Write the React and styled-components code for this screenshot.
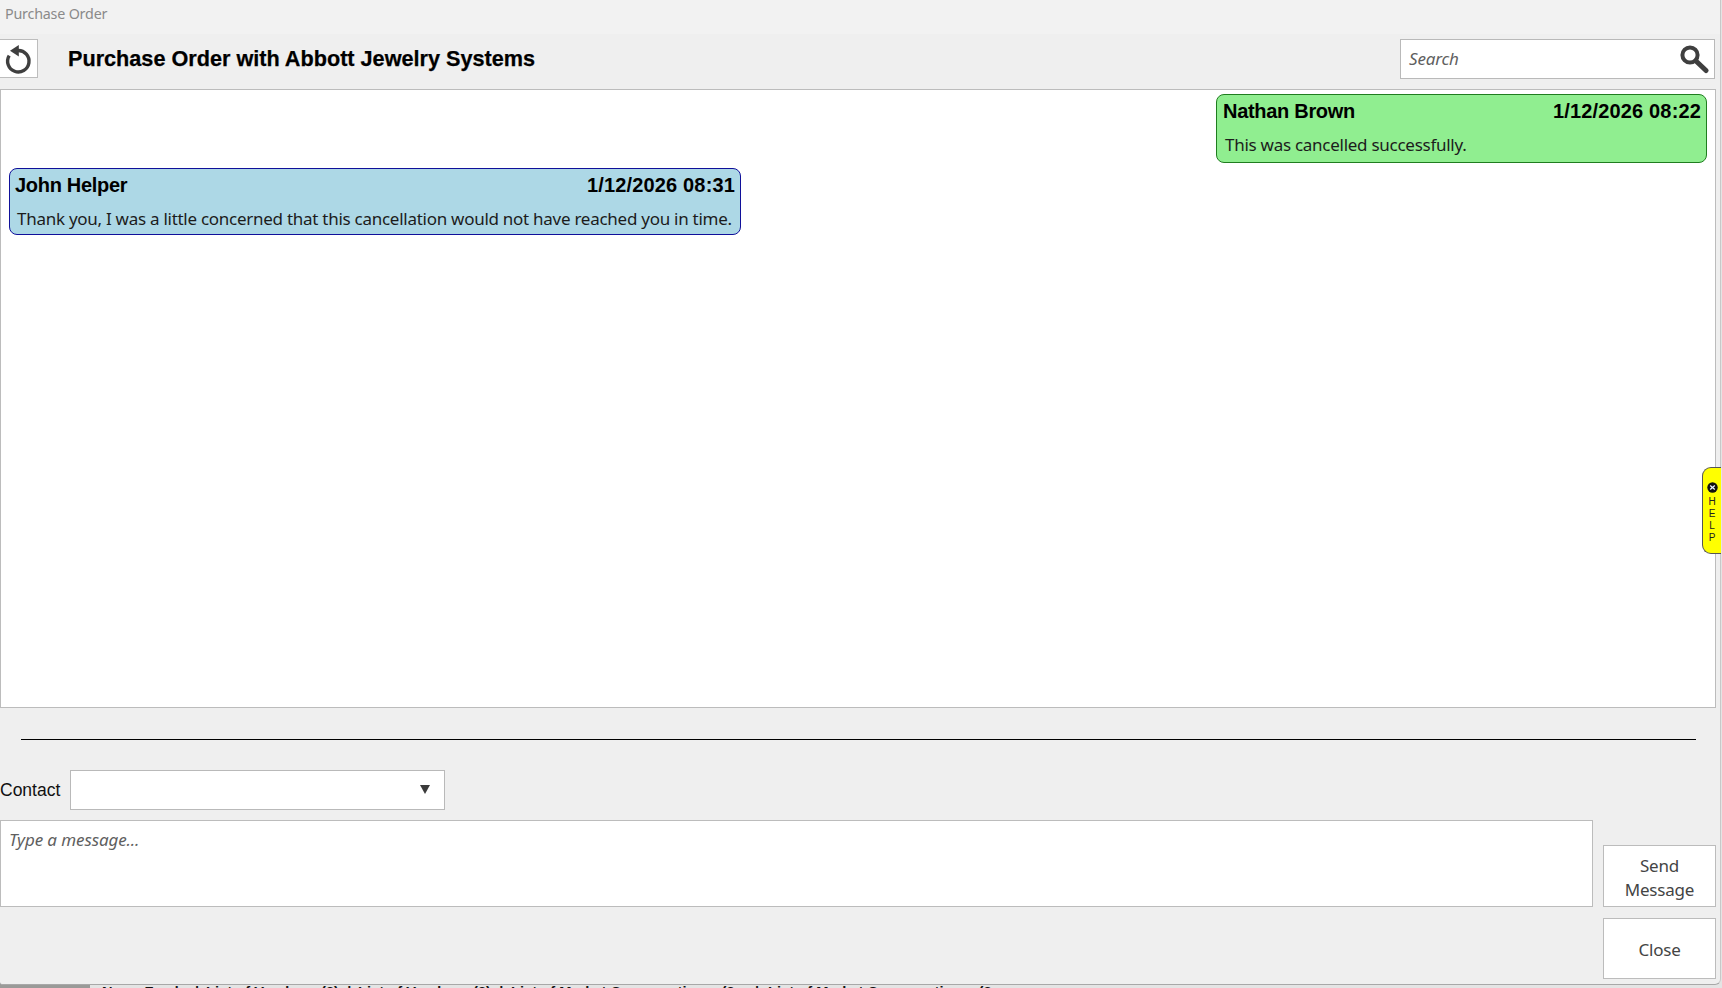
import React from "react";
import styled, { createGlobalStyle } from "styled-components";

const Global = createGlobalStyle`
  html, body { margin: 0; padding: 0; background: #8c8c8c; }
  body { font-family: "Noto Sans", "Open Sans", sans-serif; overflow: hidden; }
  * { box-sizing: border-box; }
`;

const Page = styled.div`
  position: relative;
  width: 1722px;
  height: 988px;
  overflow: hidden;
  display: flex;
  flex-direction: column;
  background: linear-gradient(90deg, #9a9a98 0 90px, #e4e4e4 90px);
`;

const Dialog = styled.div`
  width: 1721px;
  height: 985px;
  flex: none;
  display: flex;
  flex-direction: column;
  background: #efefef;
  border-bottom: 1px solid #a8a8a8;
  border-right: 1px solid #c8c8c8;
  border-bottom-right-radius: 6px;
  border-bottom-left-radius: 3px;
`;

const WindowTitle = styled.div`
  height: 34px;
  flex: none;
  padding: 4px 0 0 5px;
  background: #f2f2f2;
  color: #8a8a8a;
  font-size: 14.3px;
  line-height: 20px;
  letter-spacing: -0.2px;
`;

const Toolbar = styled.div`
  height: 55px;
  flex: none;
  display: flex;
  align-items: flex-start;
  padding: 5px 5px 0 0;
`;

const RefreshButton = styled.button`
  width: 38px;
  height: 39px;
  padding: 0;
  display: flex;
  align-items: center;
  justify-content: center;
  background: #fff;
  border: 1px solid #bdbdbd;
  border-left: none;
`;

const Heading = styled.h1`
  flex: 1;
  margin: 0 0 0 30px;
  font: bold 21.65px/40px "Liberation Sans", Arial, sans-serif;
  color: #000;
  -webkit-text-stroke: 0.25px #000;
`;

const SearchBox = styled.div`
  width: 315px;
  height: 40px;
  display: flex;
  align-items: center;
  justify-content: space-between;
  padding: 0 4px 0 8px;
  background: #fff;
  border: 1px solid #b9b9b9;
`;

const SearchHint = styled.span`
  padding-bottom: 2px;
  font: italic 17px "Noto Sans", sans-serif;
  color: #5f5f5f;
  letter-spacing: -0.15px;
`;

const ChatPanel = styled.div`
  height: 619px;
  flex: none;
  margin-right: 4px;
  padding: 4px 8px 0 8px;
  display: flex;
  flex-direction: column;
  gap: 5px;
  background: #fff;
  border: 1px solid #bcbcbc;
`;

const Bubble = styled.div`
  width: ${(p) => p.$width}px;
  height: ${(p) => p.$height}px;
  align-self: ${(p) => (p.$mine ? "flex-end" : "flex-start")};
  padding: 4px 5px 0 ${(p) => (p.$mine ? 6 : 5)}px;
  background: ${(p) => (p.$mine ? "#90ee90" : "#add8e6")};
  border: 1px solid ${(p) => (p.$mine ? "#1f7d1f" : "#10109a")};
  border-radius: 8px;
`;

const BubbleHead = styled.div`
  display: flex;
  justify-content: space-between;
  font: bold 20px/24px "Liberation Sans", Arial, sans-serif;
  color: #000;
`;

const SenderName = styled.span`
  letter-spacing: -0.3px;
`;

const SentAt = styled.span`
  letter-spacing: 0.15px;
`;

const BubbleText = styled.div`
  margin: 10px 0 0 2px;
  font-size: 17px;
  line-height: 23px;
  color: #1c1c1c;
  white-space: nowrap;
  letter-spacing: -0.27px;
`;

const Divider = styled.hr`
  margin: 31px 24px 0 21px;
  height: 1px;
  border: none;
  background: #000;
  flex: none;
`;

const ContactRow = styled.div`
  margin-top: 30px;
  height: 40px;
  flex: none;
  display: flex;
  align-items: center;
  gap: 9px;
`;

const ContactLabel = styled.label`
  font: 17.5px "Liberation Sans", Arial, sans-serif;
  color: #111;
  width: 61px;
`;

const Select = styled.div`
  width: 375px;
  height: 40px;
  display: flex;
  align-items: center;
  justify-content: flex-end;
  padding: 0 14px 2px 0;
  background: #fff;
  border: 1px solid #b9b9b9;
`;

const Composer = styled.div`
  margin-top: 10px;
  flex: none;
  display: grid;
  grid-template-columns: 1593px 113px;
  grid-template-rows: 87px 72px;
  column-gap: 10px;
`;

const MessageBox = styled.div`
  padding: 9px 8px;
  background: #fff;
  border: 1px solid #bcbcbc;
  font: italic 17px/20px "Noto Sans", sans-serif;
  color: #5f5f5f;
  letter-spacing: -0.1px;
`;

const ActionColumn = styled.div`
  grid-column: 2;
  grid-row: 1 / span 2;
  display: flex;
  flex-direction: column;
  padding-top: 25px;
  gap: 11px;
`;

const ActionButton = styled.button`
  width: 113px;
  height: ${(p) => p.$height}px;
  padding: 3px 0 0;
  background: #fff;
  border: 1px solid #bcbcbc;
  font: 17px/24px "Noto Sans", sans-serif;
  color: #444;
  letter-spacing: -0.2px;
`;

const BehindStrip = styled.div`
  height: 3px;
  flex: none;
  display: flex;
  overflow: hidden;
  font: bold 14.7px/14px "Liberation Sans", Arial, sans-serif;
  color: #111;
  white-space: pre;
`;

const StripItem = styled.span`
  flex: none;
  width: ${(p) => p.$width}px;
`;

const HelpTab = styled.div`
  position: absolute;
  left: 1702px;
  top: 467px;
  width: 19px;
  height: 87px;
  display: flex;
  flex-direction: column;
  align-items: center;
  padding-top: 14px;
  background: #ffff00;
  border: 1px solid #555;
  border-right: none;
  border-radius: 9px 0 0 9px;
`;

const HelpLetters = styled.div`
  margin-top: 3px;
  font: 10px/12px "Liberation Sans", Arial, sans-serif;
  color: #222;
  text-align: center;
`;

const RefreshIcon = () => (
  <svg width="36" height="37" viewBox="0 0 36 37" aria-hidden="true">
    <path d="M17 10.5 A10.7 10.7 0 1 1 8.2 15.6" fill="none" stroke="#3f3f3f" strokeWidth="3.4" />
    <path d="M9 10.8 L17.8 5 V16.5 Z" fill="#3f3f3f" />
  </svg>
);

const SearchIcon = () => (
  <svg width="30" height="30" viewBox="0 0 30 30" aria-hidden="true">
    <circle cx="10" cy="11" r="7.6" fill="none" stroke="#3f3f3f" strokeWidth="4" />
    <path d="M16 17 L26 26.5" stroke="#3f3f3f" strokeWidth="5" strokeLinecap="round" />
  </svg>
);

const CaretIcon = () => (
  <svg width="10" height="9" viewBox="0 0 10 9" aria-hidden="true">
    <path d="M0 0 H10 L5 9 Z" fill="#3b3b3b" />
  </svg>
);

const CloseDot = () => (
  <svg width="11" height="11" viewBox="0 0 11 11" aria-hidden="true">
    <circle cx="5.5" cy="5.5" r="5.2" fill="#111" />
    <path d="M3.2 3.4 L7.8 7.6 M7.8 3.4 L3.2 7.6" stroke="#e8f0ff" strokeWidth="1.3" />
  </svg>
);

export default function App() {
  return (
    <Page>
      <Global />
      <Dialog>
        <WindowTitle>Purchase Order</WindowTitle>
        <Toolbar>
          <RefreshButton aria-label="Refresh"><RefreshIcon /></RefreshButton>
          <Heading>Purchase Order with Abbott Jewelry Systems</Heading>
          <SearchBox>
            <SearchHint>Search</SearchHint>
            <SearchIcon />
          </SearchBox>
        </Toolbar>
        <ChatPanel>
          <Bubble $mine $width={491} $height={69}>
            <BubbleHead><SenderName>Nathan Brown</SenderName><SentAt>1/12/2026 08:22</SentAt></BubbleHead>
            <BubbleText>This was cancelled successfully.</BubbleText>
          </Bubble>
          <Bubble $width={732} $height={67}>
            <BubbleHead><SenderName>John Helper</SenderName><SentAt>1/12/2026 08:31</SentAt></BubbleHead>
            <BubbleText>Thank you, I was a little concerned that this cancellation would not have reached you in time.</BubbleText>
          </Bubble>
        </ChatPanel>
        <Divider />
        <ContactRow>
          <ContactLabel>Contact</ContactLabel>
          <Select><CaretIcon /></Select>
        </ContactRow>
        <Composer>
          <MessageBox>Type a message...</MessageBox>
          <ActionColumn>
            <ActionButton $height={62}>Send<br />Message</ActionButton>
            <ActionButton $height={61}>Close</ActionButton>
          </ActionColumn>
        </Composer>
      </Dialog>
      <BehindStrip>
        <StripItem $width={102} />
        <StripItem $width={104}>News Feeds  |</StripItem>
        <StripItem $width={152}>List of Vendors: (2)  |</StripItem>
        <StripItem $width={153}>List of Vendors: (2)  |</StripItem>
        <StripItem $width={257}>List of Market Conversations: (2     |</StripItem>
        <StripItem $width={240}>List of Market Conversations: (2</StripItem>
      </BehindStrip>
      <HelpTab>
        <CloseDot />
        <HelpLetters>H<br />E<br />L<br />P</HelpLetters>
      </HelpTab>
    </Page>
  );
}
